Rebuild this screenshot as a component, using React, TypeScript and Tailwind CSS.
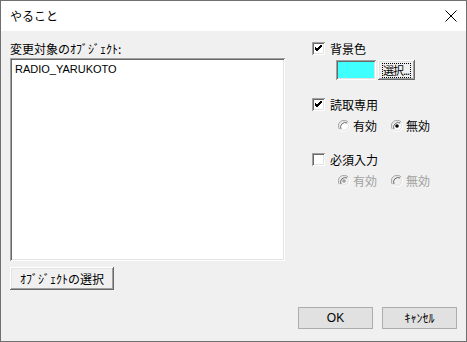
import React from 'react';

const font = { fontFamily: '"Noto Sans CJK JP", "Liberation Sans", sans-serif' };

function Check({ checked }: { checked: boolean }) {
  return (
    <div className="w-[13px] h-[13px] bg-white shadow-[inset_1px_1px_#a0a0a0,inset_-1px_-1px_#ffffff,inset_2px_2px_#696969,inset_-2px_-2px_#e3e3e3] flex items-center justify-center">
      {checked && (
        <svg width="7" height="7" viewBox="0 0 7 7">
          <path d="M0 2 L2 4 L7 -1 M0 3 L2 5 L7 0 M0 4 L2 6 L7 1" stroke="#000" strokeWidth="1" fill="none" />
        </svg>
      )}
    </div>
  );
}

function Radio({ on, disabled }: { on: boolean; disabled?: boolean }) {
  return (
    <svg width="12" height="12" viewBox="0 0 12 12">
      <path d="M10.5 2.5 A5.5 5.5 0 0 0 1.5 9.5" stroke="#a0a0a0" fill="none" />
      <path d="M1.5 9.5 A5.5 5.5 0 0 0 10.5 2.5" stroke="#ffffff" fill="none" />
      <circle cx="6" cy="6" r="4.5" fill={disabled ? '#f0f0f0' : '#ffffff'} stroke="#e3e3e3" />
      <path d="M9 3 A4.5 4.5 0 0 0 3 9" stroke="#696969" fill="none" />
      {on && <circle cx="6" cy="6" r="1.8" fill={disabled ? '#a0a0a0' : '#000'} />}
    </svg>
  );
}

const classicBtn =
  'bg-[#f0f0f0] shadow-[inset_-1px_-1px_#696969,inset_1px_1px_#ffffff,inset_-2px_-2px_#a0a0a0,inset_2px_2px_#e3e3e3] flex items-center justify-center text-[12px] text-black whitespace-nowrap';

export default function App() {
  return (
    <div className="w-[467px] h-[342px] border border-[#707070] bg-[#f0f0f0] flex flex-col" style={font}>
      <div className="h-[30px] bg-white flex items-center justify-between pl-[9px] pr-[8px]">
        <span className="text-[12px] text-black">やること</span>
        <svg width="12" height="12" viewBox="0 0 12 12" className="mr-[1px]">
          <path d="M0.5 0.5 L11.5 11.5 M11.5 0.5 L0.5 11.5" stroke="#000" strokeWidth="1" />
        </svg>
      </div>

      <div className="flex-1 flex flex-col pl-[9px] pr-[9px]">
        <div className="flex h-[259px]">
          <div className="w-[275px] flex flex-col pt-[10px]">
            <div className="text-[12px] leading-[16px] text-black whitespace-nowrap">変更対象のｵﾌﾞｼﾞｪｸﾄ:</div>
            <div className="mt-[1px] h-[203px] bg-white shadow-[inset_1px_1px_#a0a0a0,inset_-1px_-1px_#ffffff,inset_2px_2px_#696969,inset_-2px_-2px_#e3e3e3] px-[5px] pt-[4px]">
              <div className="text-[11px] leading-[14px] text-black" style={{ fontFamily: '"Liberation Sans", sans-serif' }}>
                RADIO_YARUKOTO
              </div>
            </div>
            <div className={`mt-[6px] w-[104px] h-[23px] ${classicBtn}`}>ｵﾌﾞｼﾞｪｸﾄの選択</div>
          </div>

          <div className="ml-[27px] flex flex-col pt-[11px] text-[12px] text-black">
            <div className="flex items-center h-[13px]">
              <Check checked />
              <span className="ml-[5px]">背景色</span>
            </div>
            <div className="flex mt-[5px] ml-[24px] h-[20px]">
              <div className="w-[40px] h-[20px] bg-[#40ffff] shadow-[inset_1px_1px_#a0a0a0,inset_-1px_-1px_#ffffff,inset_2px_2px_#696969,inset_-2px_-2px_#e3e3e3]" />
              <div className={`ml-[2px] w-[37px] h-[20px] ${classicBtn}`}>
                <span className="border border-dotted border-black leading-[13px] text-[11px] tracking-[-1px] pr-[1px]">選択...</span>
              </div>
            </div>

            <div className="flex items-center h-[13px] mt-[18px]">
              <Check checked />
              <span className="ml-[5px]">読取専用</span>
            </div>
            <div className="flex items-center h-[12px] mt-[9px] ml-[26px]">
              <Radio on={false} />
              <span className="ml-[3px]">有効</span>
              <span className="ml-[14px]"><Radio on /></span>
              <span className="ml-[3px]">無効</span>
            </div>

            <div className="flex items-center h-[13px] mt-[21px]">
              <Check checked={false} />
              <span className="ml-[5px]">必須入力</span>
            </div>
            <div className="flex items-center h-[12px] mt-[9px] ml-[26px] text-[#a0a0a0]">
              <Radio on disabled />
              <span className="ml-[3px]">有効</span>
              <span className="ml-[14px]"><Radio on={false} disabled /></span>
              <span className="ml-[3px]">無効</span>
            </div>
          </div>
        </div>

        <div className="flex justify-end gap-[9px] mt-[17px]">
          <div className="w-[75px] h-[22px] bg-[#e1e1e1] border border-[#adadad] flex items-center justify-center text-[12px] text-black" style={{ fontFamily: '"Liberation Sans", sans-serif' }}>
            OK
          </div>
          <div className="w-[75px] h-[22px] bg-[#e1e1e1] border border-[#adadad] flex items-center justify-center text-[12px] text-black whitespace-nowrap">
            ｷｬﾝｾﾙ
          </div>
        </div>
      </div>
    </div>
  );
}
